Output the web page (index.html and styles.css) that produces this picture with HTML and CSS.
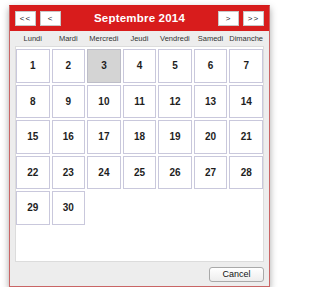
FILE: index.html
```html
<!DOCTYPE html>
<html lang="fr">
<head>
<meta charset="utf-8">
<title>Septembre 2014</title>
<link rel="stylesheet" href="styles.css">
</head>
<body>
<div class="dialog">
  <div class="header">
    <div class="nav">
      <button class="navbtn">&lt;&lt;</button>
      <button class="navbtn">&lt;</button>
    </div>
    <div class="title">Septembre 2014</div>
    <div class="nav">
      <button class="navbtn">&gt;</button>
      <button class="navbtn">&gt;&gt;</button>
    </div>
  </div>
  <div class="weekdays">
    <span>Lundi</span><span>Mardi</span><span>Mercredi</span><span>Jeudi</span><span>Vendredi</span><span>Samedi</span><span>Dimanche</span>
  </div>
  <div class="month">
    <div class="grid">
      <div class="day">1</div><div class="day">2</div><div class="day selected">3</div><div class="day">4</div><div class="day">5</div><div class="day">6</div><div class="day">7</div>
      <div class="day">8</div><div class="day">9</div><div class="day">10</div><div class="day">11</div><div class="day">12</div><div class="day">13</div><div class="day">14</div>
      <div class="day">15</div><div class="day">16</div><div class="day">17</div><div class="day">18</div><div class="day">19</div><div class="day">20</div><div class="day">21</div>
      <div class="day">22</div><div class="day">23</div><div class="day">24</div><div class="day">25</div><div class="day">26</div><div class="day">27</div><div class="day">28</div>
      <div class="day">29</div><div class="day">30</div>
    </div>
  </div>
  <div class="footer">
    <button class="cancel">Cancel</button>
  </div>
</div>
</body>
</html>
```

FILE: styles.css
```css
html, body {
  margin: 0;
  padding: 0;
  background: #ffffff;
}

body {
  font-family: "Liberation Sans", Arial, sans-serif;
  color: #222;
}

.dialog {
  margin: 5px 0 0 9px;
  width: 259px;
  height: 280px;
  border: 1px solid #c96565;
  border-top-color: #d41a1a;
  background: #ededed;
  box-shadow: 0 3px 7px rgba(0, 0, 0, 0.35);
  display: flex;
  flex-direction: column;
}

.header {
  height: 25px;
  background: #d81c1c;
  display: flex;
  align-items: flex-start;
  padding: 5px 5px 0 5px;
  box-sizing: border-box;
}

.nav {
  display: flex;
  gap: 4px;
}

.navbtn {
  width: 21px;
  height: 15px;
  margin: 0;
  padding: 0;
  border: 1px solid #c8c8c8;
  background: #ffffff;
  font-family: "Liberation Sans", Arial, sans-serif;
  font-size: 8px;
  color: #222;
  letter-spacing: 1px;
  line-height: 13px;
  text-align: center;
}

.title {
  flex: 1;
  text-align: center;
  color: #ffffff;
  font-weight: bold;
  font-size: 11.5px;
  letter-spacing: 0.2px;
  line-height: 15px;
}

.weekdays {
  height: 15px;
  margin: 0 6px;
  display: grid;
  grid-template-columns: repeat(7, 1fr);
  column-gap: 2px;
  align-items: center;
  font-size: 7.5px;
  color: #333;
  text-align: center;
  white-space: nowrap;
}

.month {
  margin: 0 5px;
  height: 216px;
  box-sizing: border-box;
  border: 1px solid #dcdcdc;
  background: #ffffff;
  padding: 2px 0 0 0;
}

.grid {
  display: grid;
  grid-template-columns: repeat(7, 1fr);
  grid-auto-rows: 33.5px;
  gap: 2px;
}

.day {
  box-sizing: border-box;
  border: 1px solid #c9c8dc;
  background: #ffffff;
  display: flex;
  align-items: center;
  justify-content: center;
  font-weight: bold;
  font-size: 10px;
  color: #1e1e1e;
}

.day.selected {
  background: #d4d4d4;
  border-color: #bdbdc8;
}

.footer {
  flex: 1;
  display: flex;
  justify-content: flex-end;
  align-items: flex-start;
  padding: 5px 5px 0 0;
}

.cancel {
  width: 55px;
  height: 15px;
  margin: 0;
  padding: 0;
  border: 1px solid #a9a9a9;
  border-radius: 3px;
  background: linear-gradient(#ffffff, #ededed);
  font-family: "Liberation Sans", Arial, sans-serif;
  font-size: 9px;
  color: #111;
  line-height: 13px;
}
```
